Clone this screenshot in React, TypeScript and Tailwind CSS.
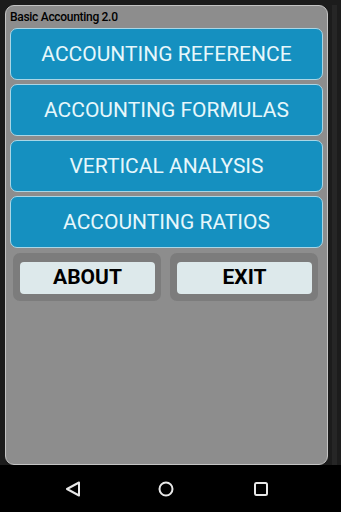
import React from "react";

const blue = [
  "ACCOUNTING REFERENCE",
  "ACCOUNTING FORMULAS",
  "VERTICAL ANALYSIS",
  "ACCOUNTING RATIOS",
];

export default function App() {
  return (
    <div
      className="w-[341px] h-[512px] bg-[#1c1c1c] flex flex-col overflow-hidden"
      style={{ fontFamily: "Roboto, 'Liberation Sans', sans-serif" }}
    >
      <div className="flex h-[465px] pt-[5px] pl-[5px]">
        <div className="w-[323px] h-[460px] rounded-[9px] border border-[#c4c4c4] bg-[#8d8d8d] flex flex-col px-[4px]">
          <div className="h-[22px] pt-[5px] pl-[0px] text-[12px] leading-[13px] font-medium text-black tracking-[-0.3px]">
            Basic Accounting 2.0
          </div>
          <div className="flex flex-col gap-[4px]">
            {blue.map((t) => (
              <div
                key={t}
                className="h-[52px] pt-[2px] rounded-[7px] border-[1.5px] border-[#a9d6e6] bg-[#1590c0] flex items-center justify-center text-[21px] text-[#e6f7fb]"
              >
                {t}
              </div>
            ))}
          </div>
          <div className="flex mt-[5px] gap-[9px] pl-[3px]">
            {["ABOUT", "EXIT"].map((t) => (
              <div
                key={t}
                className="w-[148px] h-[48px] rounded-[7px] bg-[#7c7c7c] pl-[7px] pr-[6px] pt-[9px] pb-[7px]"
              >
                <div className="h-full rounded-[4px] bg-[#dde9eb] flex items-center justify-center text-[21px] font-bold text-black">
                  {t}
                </div>
              </div>
            ))}
          </div>
        </div>
        <div className="flex-1 flex justify-end">
          <div className="w-[5px] bg-[#262626] mr-[4px]" />
        </div>
      </div>
      <div className="flex-1 bg-black flex items-center pl-[64px]">
        <svg width="18" height="18" viewBox="0 0 18 18">
          <path d="M15 2.5 L3 9 L15 15.5 Z" fill="none" stroke="#e8e8e8" strokeWidth="2" strokeLinejoin="round" />
        </svg>
        <svg width="18" height="18" viewBox="0 0 18 18" className="ml-[75px]">
          <circle cx="9" cy="9" r="6.5" fill="none" stroke="#e8e8e8" strokeWidth="2" />
        </svg>
        <svg width="18" height="18" viewBox="0 0 18 18" className="ml-[77px]">
          <rect x="3" y="3" width="12" height="12" rx="1.5" fill="none" stroke="#e8e8e8" strokeWidth="2" />
        </svg>
      </div>
    </div>
  );
}
